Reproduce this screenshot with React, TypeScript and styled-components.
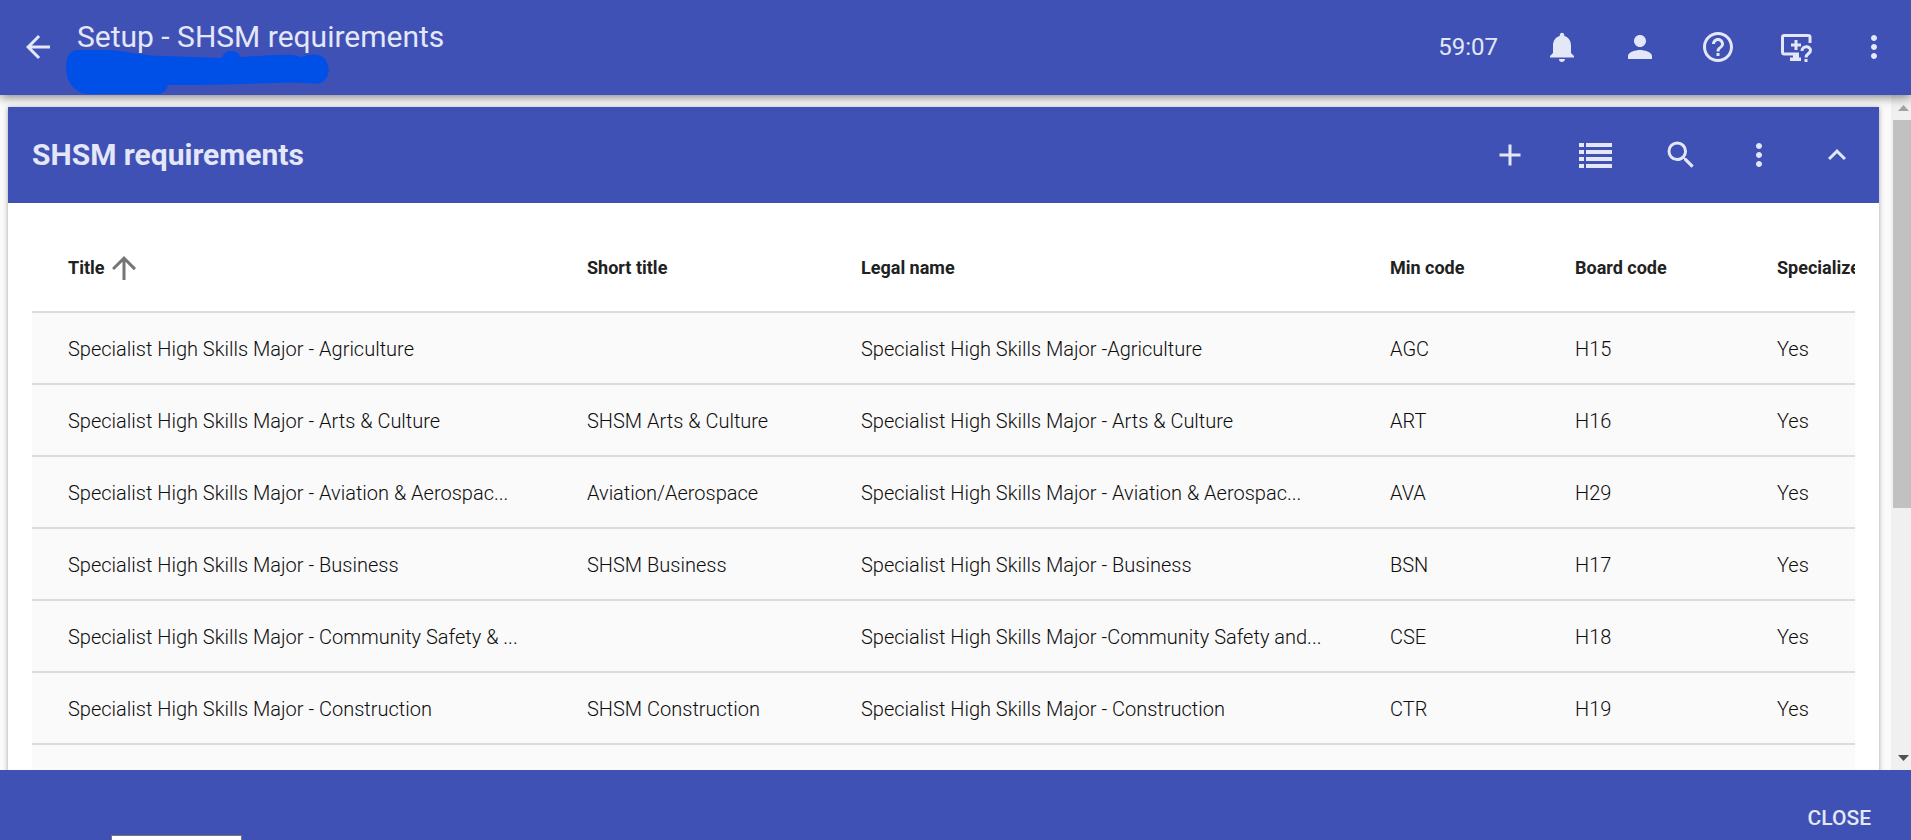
import React from "react";
import styled, { createGlobalStyle } from "styled-components";
import {
  MdAdd,
  MdArrowBack,
  MdArrowUpward,
  MdExpandLess,
  MdHelpOutline,
  MdMoreVert,
  MdNotifications,
  MdPerson,
  MdSearch,
} from "react-icons/md";

const primary = "#3f51b5";
const onPrimary = "#e4e7f8";

const GlobalStyle = createGlobalStyle`
  *, *::before, *::after { box-sizing: border-box; }
  body {
    margin: 0;
    background: #fafafa;
    color: #212121;
    font-family: Roboto, "Liberation Sans", sans-serif;
  }
`;

const Page = styled.div`
  position: relative;
  display: flex;
  flex-direction: column;
  height: 100vh;
  overflow: hidden;
`;

const TopBar = styled.header`
  position: relative;
  z-index: 1;
  flex: none;
  display: flex;
  align-items: center;
  height: 95px;
  padding: 0 19px 2px 20px;
  background: ${primary};
  color: ${onPrimary};
  box-shadow: 0 2px 10px rgba(0, 0, 0, 0.5);
`;

const IconButton = styled.button<{ $wide?: boolean }>`
  display: flex;
  align-items: center;
  justify-content: center;
  width: ${(p) => (p.$wide ? 51 : 36)}px;
  height: 36px;
  padding: 0;
  border: 0;
  background: none;
  color: inherit;
  font-size: 36px;
  cursor: pointer;
`;

const Heading = styled.div`
  position: relative;
  flex: 1;
  align-self: flex-start;
  padding: 19px 0 0 21px;
`;

const PageTitle = styled.h1`
  margin: 0;
  font-size: 30px;
  line-height: 36px;
  font-weight: 400;
`;

const Scribble = styled.svg`
  position: absolute;
  top: 50px;
  left: 9px;
`;

const Actions = styled.div`
  display: flex;
  align-items: center;
  gap: 42px;
`;

const Timer = styled.span`
  font-size: 24px;
  line-height: 36px;
  margin-right: 4px;
`;

const Body = styled.div`
  flex: 1;
  min-height: 0;
  display: flex;
`;

const Content = styled.main`
  flex: 1;
  min-width: 0;
  overflow: hidden;
  padding: 12px 12px 0 8px;
`;

const Card = styled.section`
  background: #fff;
  box-shadow: 0 1px 5px rgba(0, 0, 0, 0.35);
`;

const CardHeader = styled.div`
  display: flex;
  align-items: center;
  justify-content: space-between;
  height: 96px;
  padding: 0 24px;
  background: ${primary};
  color: ${onPrimary};
`;

const CardTitle = styled.h2`
  margin: 0;
  font-size: 30px;
  line-height: 36px;
  font-weight: 700;
`;

const TableWrap = styled.div`
  margin: 0 24px;
  padding-top: 24px;
  overflow: hidden;
`;

const Table = styled.table`
  width: 1945px;
  min-width: 100%;
  table-layout: fixed;
  border-collapse: separate;
  border-spacing: 0;
`;

const HeadCell = styled.th<{ $width: number }>`
  width: ${(p) => p.$width}px;
  height: 84px;
  padding: 0 0 2px 36px;
  text-align: left;
  font-size: 18px;
  line-height: 24px;
  font-weight: 700;
  white-space: nowrap;
`;

const SortLabel = styled.span`
  display: flex;
  align-items: center;
  gap: 1px;

  svg {
    color: #757575;
    font-size: 36px;
  }
`;

const Cell = styled.td`
  height: 72px;
  padding: 2px 0 0 36px;
  border-top: 2px solid #dcdcdc;
  background: #fafafa;
  color: #0c0c0c;
  font-size: 20px;
  line-height: 24px;
  font-weight: 300;
  white-space: nowrap;
`;

const ScrollBar = styled.div`
  flex: none;
  display: flex;
  flex-direction: column;
  width: 20px;
  padding-left: 2px;
  background: #f0f0f0;
`;

const ScrollArrow = styled.div<{ $color: string }>`
  flex: none;
  display: flex;
  align-items: center;
  justify-content: center;
  height: 25px;
  padding-left: 3px;
  color: ${(p) => p.$color};
`;

const ScrollTrack = styled.div`
  flex: 1;
`;

const ScrollThumb = styled.div`
  height: 62%;
  background: #c1c1c1;
`;

const Footer = styled.footer`
  flex: none;
  display: flex;
  align-items: flex-end;
  justify-content: flex-end;
  height: 70px;
  padding: 0 40px 10px;
  background: ${primary};
`;

const CloseButton = styled.button`
  padding: 0;
  border: 0;
  background: none;
  color: ${onPrimary};
  font-family: inherit;
  font-size: 21px;
  line-height: 24px;
  font-weight: 500;
  cursor: pointer;
`;

const StatusPopup = styled.div`
  position: absolute;
  bottom: 0;
  left: 111px;
  width: 131px;
  height: 5px;
  border: 1px solid #767676;
  border-bottom: 0;
  background: #fff;
`;

const ListIcon = () => (
  <svg width="33" height="25" viewBox="0 0 33 25" fill="currentColor" aria-hidden="true">
    {[0, 7, 14, 21].map((y) => (
      <g key={y}>
        <rect x="0" y={y} width="5" height="4" />
        <rect x="7" y={y} width="26" height="4" />
      </g>
    ))}
  </svg>
);

const MonitorHelpIcon = () => (
  <svg width="36" height="36" viewBox="0 0 36 36" fill="none" stroke="currentColor" aria-hidden="true">
    <path d="M21 25H6.500Q4.500 25 4.500 23V8Q4.500 6.500 6.500 6.500H30Q32 6.500 32 8V14" strokeWidth="3" />
    <path d="M18 11V21M13 16H23" strokeWidth="3" />
    <path d="M15 26H21V28.500H23V32H12V28.500H15Z" fill="currentColor" stroke="none" />
    <path d="M24 22C24 16.500 32.500 16.500 32.500 21.500C32.500 24.500 28 24.500 28 28.500" strokeWidth="3" />
    <path d="M28 30V33" strokeWidth="3" />
  </svg>
);

const columns = [
  { label: "Title", width: 519, sorted: true },
  { label: "Short title", width: 274 },
  { label: "Legal name", width: 529 },
  { label: "Min code", width: 185 },
  { label: "Board code", width: 202 },
  { label: "Specialized", width: 236 },
];

const prefix = "Specialist High Skills Major -";

const rows = [
  [`${prefix} Agriculture`, "", `${prefix}Agriculture`, "AGC", "H15", "Yes"],
  [`${prefix} Arts & Culture`, "SHSM Arts & Culture", `${prefix} Arts & Culture`, "ART", "H16", "Yes"],
  [`${prefix} Aviation & Aerospac...`, "Aviation/Aerospace", `${prefix} Aviation & Aerospac...`, "AVA", "H29", "Yes"],
  [`${prefix} Business`, "SHSM Business", `${prefix} Business`, "BSN", "H17", "Yes"],
  [`${prefix} Community Safety & ...`, "", `${prefix}Community Safety and...`, "CSE", "H18", "Yes"],
  [`${prefix} Construction`, "SHSM Construction", `${prefix} Construction`, "CTR", "H19", "Yes"],
  ["", "", "", "", "", ""],
];

export default function App() {
  return (
    <Page>
      <GlobalStyle />
      <TopBar>
        <IconButton aria-label="Back"><MdArrowBack /></IconButton>
        <Heading>
          <PageTitle>Setup - SHSM requirements</PageTitle>
          <Scribble width="266" height="45" viewBox="0 0 266 45" fill="#004fe6" aria-hidden="true">
            <path d="M13 0H44C62 1 77 6 98 6L157 8C159 -1 173 -1 175 7C195 6 215 4 229 5L236 7C247 3 256 4 260 9C266 17 264 27 258 32C253 35 246 33 240 33C210 32 170 35 130 35H103C102 39 99 44 92 44L22 44C10 43 1 32 1 17C1 7 5 0 13 0Z" />
          </Scribble>
        </Heading>
        <Actions>
          <Timer>59:07</Timer>
          <IconButton aria-label="Notifications"><MdNotifications /></IconButton>
          <IconButton aria-label="Account"><MdPerson /></IconButton>
          <IconButton aria-label="Help"><MdHelpOutline /></IconButton>
          <IconButton aria-label="Remote support"><MonitorHelpIcon /></IconButton>
          <IconButton aria-label="More"><MdMoreVert /></IconButton>
        </Actions>
      </TopBar>
      <Body>
        <Content>
          <Card>
            <CardHeader>
              <CardTitle>SHSM requirements</CardTitle>
              <Actions>
                <IconButton aria-label="Add"><MdAdd /></IconButton>
                <IconButton aria-label="List view" $wide><ListIcon /></IconButton>
                <IconButton aria-label="Search"><MdSearch /></IconButton>
                <IconButton aria-label="More options"><MdMoreVert /></IconButton>
                <IconButton aria-label="Collapse"><MdExpandLess /></IconButton>
              </Actions>
            </CardHeader>
            <TableWrap>
              <Table>
                <thead>
                  <tr>
                    {columns.map((c) => (
                      <HeadCell key={c.label} $width={c.width} scope="col">
                        {c.sorted ? <SortLabel>{c.label}<MdArrowUpward /></SortLabel> : c.label}
                      </HeadCell>
                    ))}
                  </tr>
                </thead>
                <tbody>
                  {rows.map((row, i) => (
                    <tr key={i}>
                      {row.map((value, j) => <Cell key={j}>{value}</Cell>)}
                    </tr>
                  ))}
                </tbody>
              </Table>
            </TableWrap>
          </Card>
        </Content>
        <ScrollBar aria-hidden="true">
          <ScrollArrow $color="#a3a3a3">
            <svg width="11" height="6" viewBox="0 0 11 6" fill="currentColor"><path d="M0 6L5.500 0L11 6Z" /></svg>
          </ScrollArrow>
          <ScrollTrack><ScrollThumb /></ScrollTrack>
          <ScrollArrow $color="#505050">
            <svg width="11" height="6" viewBox="0 0 11 6" fill="currentColor"><path d="M0 0H11L5.500 6Z" /></svg>
          </ScrollArrow>
        </ScrollBar>
      </Body>
      <Footer><CloseButton>CLOSE</CloseButton></Footer>
      <StatusPopup />
    </Page>
  );
}
